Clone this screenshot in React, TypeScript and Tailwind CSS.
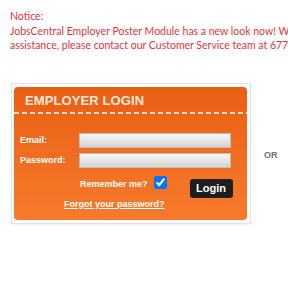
import React from "react";

export default function App() {
  return (
    <div className="w-[288px] h-[288px] overflow-hidden bg-white relative font-['Liberation_Sans',Arial,sans-serif]">
      <div className="pt-[9px] pl-[10px] w-[600px] text-[#e2363b] text-[10.5px] leading-[14.5px] font-['Lato','Open_Sans',sans-serif] whitespace-nowrap">
        <div>Notice:</div>
        <div>JobsCentral Employer Poster Module has a new look now! We hope you enjoy it. For any</div>
        <div>assistance, please contact our Customer Service team at 6774 8888.</div>
      </div>

      <div className="flex items-center mt-[30px]">
        <div className="ml-[11px] w-[240px] h-[141px] border border-[#e3e3e3] shadow-[0_1px_2px_rgba(0,0,0,0.06)] pl-[2px] pr-[3px] pt-[3px] pb-[3px] bg-white">
          <div className="h-full rounded-[4px] bg-linear-to-b from-[#e95e12] to-[#f77a2b] text-white">
            <div className="pt-[6px] pl-[11px] text-[13px] leading-[16px] font-bold text-[#fde9dc] tracking-[0.1px]">
              EMPLOYER LOGIN
            </div>
            <div className="mt-[3px] h-[2px] bg-[repeating-linear-gradient(90deg,#fbe2d2_0_5px,transparent_5px_8px)]" />
            <div className="pl-[6px] pt-[19px] flex flex-col gap-[5px]">
              <div className="flex items-center">
                <div className="w-[59px] text-[9px] font-bold leading-[11px]">Email:</div>
                <div className="w-[152px] h-[15px] border border-[#bdbdbd] bg-linear-to-b from-[#f8f8f8] to-[#d3d3d3]" />
              </div>
              <div className="flex items-center">
                <div className="w-[59px] text-[9px] font-bold leading-[11px]">Password:</div>
                <div className="w-[152px] h-[15px] border border-[#bdbdbd] bg-linear-to-b from-[#f8f8f8] to-[#d3d3d3]" />
              </div>
            </div>
            <div className="flex items-start mt-[8px]">
              <div className="ml-[66px] mt-[3px] text-[9px] font-bold leading-[11px]">Remember me?</div>
              <input type="checkbox" defaultChecked className="ml-[6px] w-[13px] h-[13px] m-0" />
              <button className="ml-[23px] mt-[3px] w-[43px] h-[19px] rounded-[3px] bg-[#1e1e1e] text-white text-[11px] font-bold leading-[19px]">
                Login
              </button>
            </div>
            <div className="ml-[50px] mt-[1px] text-[9px] font-bold leading-[11px] underline">
              Forgot your password?
            </div>
          </div>
        </div>
        <div className="ml-[13px] mt-[6px] text-[9px] font-bold text-[#707070]">OR</div>
      </div>
    </div>
  );
}
